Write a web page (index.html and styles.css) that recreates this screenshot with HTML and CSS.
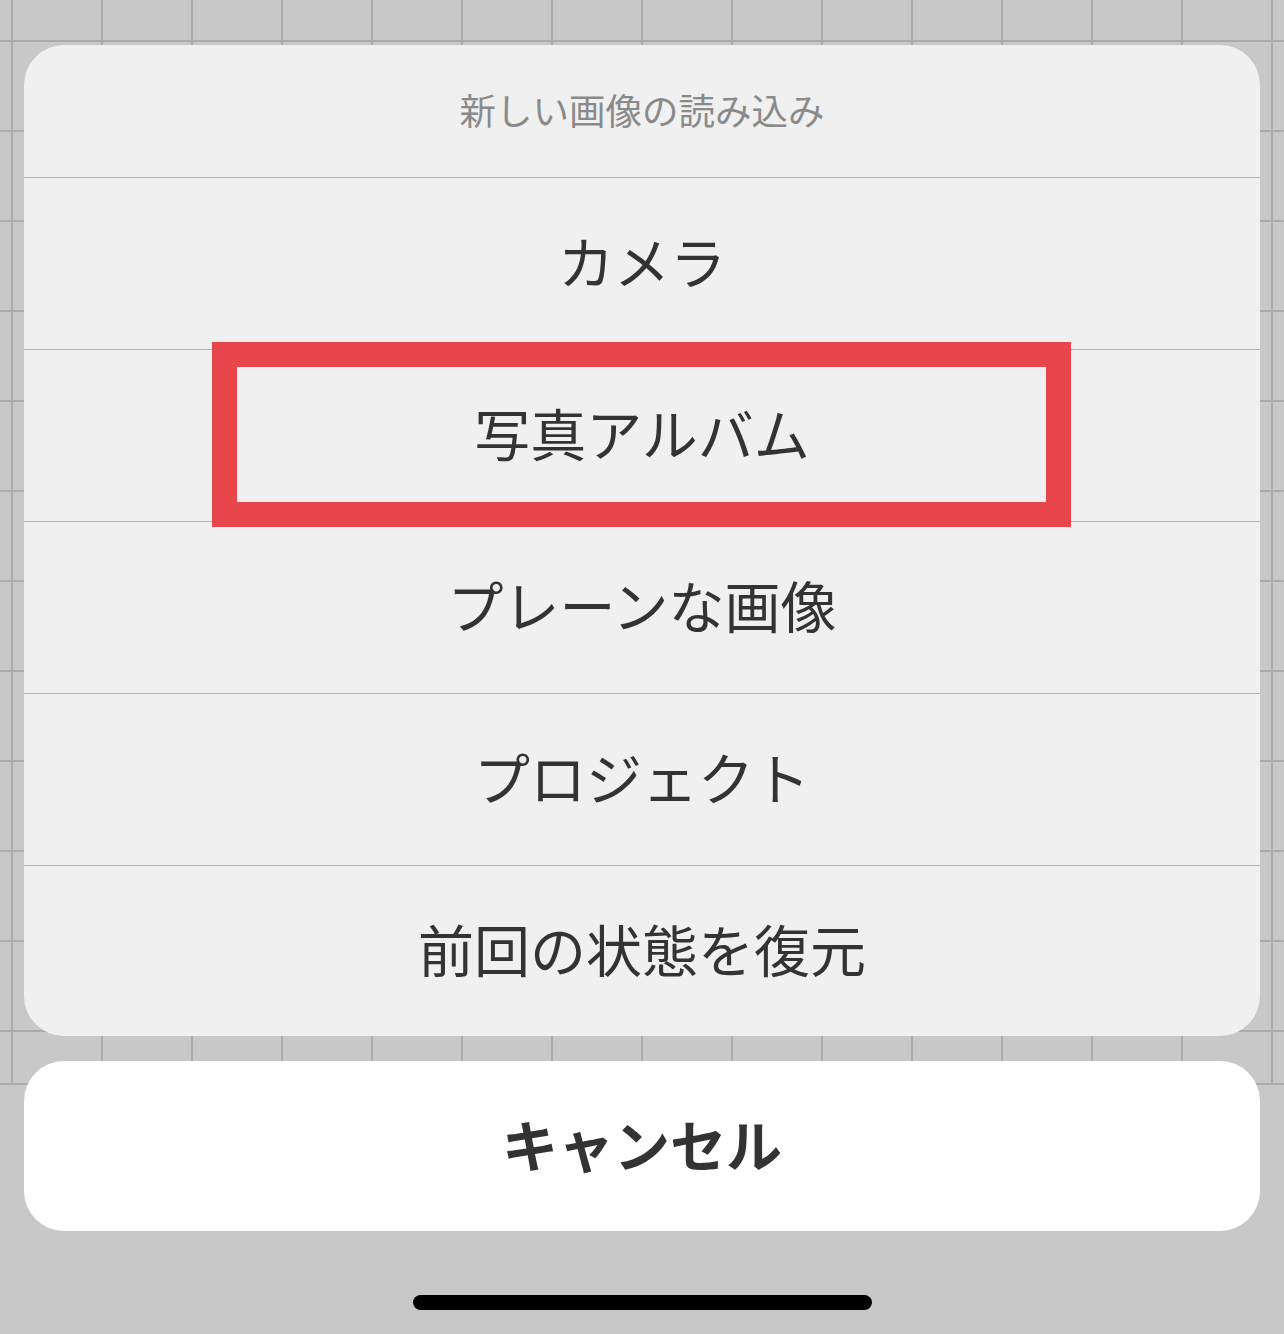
FILE: index.html
```html
<!DOCTYPE html>
<html lang="ja">
<head>
<meta charset="utf-8">
<title>新しい画像の読み込み</title>
<link rel="stylesheet" href="styles.css">
</head>
<body>
<div class="screen">
  <div class="sheet">
    <div class="sheet-title">新しい画像の読み込み</div>
    <div class="sheet-row">カメラ</div>
    <div class="sheet-row highlighted">写真アルバム<span class="highlight-box"></span></div>
    <div class="sheet-row">プレーンな画像</div>
    <div class="sheet-row">プロジェクト</div>
    <div class="sheet-row">前回の状態を復元</div>
  </div>
  <div class="cancel">キャンセル</div>
  <div class="home-indicator"></div>
</div>
</body>
</html>
```

FILE: styles.css
```css
html, body {
  margin: 0;
  padding: 0;
}

body {
  width: 1284px;
  height: 1334px;
  overflow: hidden;
  font-family: "Noto Sans CJK JP", "Noto Sans", sans-serif;
  background-color: #c8c8c8;
  background-image:
    linear-gradient(to bottom, transparent 1083px, #ababab 1083px, #ababab 1085px, #c8c8c8 1085px),
    linear-gradient(to right, transparent 11px, #ababab 11px, #ababab 13px, transparent 13px),
    linear-gradient(to bottom, transparent 40px, #ababab 40px, #ababab 42px, transparent 42px);
  background-size: 100% 100%, 90px 100%, 100% 90px;
  background-repeat: no-repeat, repeat-x, repeat-y;
}

.screen {
  display: flex;
  flex-direction: column;
  align-items: center;
  padding: 45px 24px 0;
}

.sheet {
  width: 1236px;
  background: #f0f0f0;
  border-radius: 40px;
  display: flex;
  flex-direction: column;
}

.sheet-title {
  box-sizing: border-box;
  height: 132px;
  padding-bottom: 3px;
  display: flex;
  align-items: center;
  justify-content: center;
  font-size: 36.5px;
  color: #8a8a8a;
}

.sheet-row {
  position: relative;
  box-sizing: border-box;
  height: 172px;
  padding-bottom: 8px;
  border-top: 1px solid #b3b3b3;
  display: flex;
  align-items: center;
  justify-content: center;
  font-size: 56px;
  color: #333333;
}

.sheet-row:last-child {
  height: 171px;
}

.highlight-box {
  position: absolute;
  z-index: 2;
  left: 188px;
  top: -8px;
  width: 859px;
  height: 185px;
  box-sizing: border-box;
  border: 25px solid #e9464c;
}

.cancel {
  box-sizing: border-box;
  margin-top: 25px;
  width: 1236px;
  height: 170px;
  padding-bottom: 8px;
  background: #ffffff;
  border-radius: 40px;
  display: flex;
  align-items: center;
  justify-content: center;
  font-size: 56px;
  font-weight: 700;
  color: #333333;
}

.home-indicator {
  margin-top: 64px;
  width: 459px;
  height: 15px;
  border-radius: 8px;
  background: #000000;
}
```
